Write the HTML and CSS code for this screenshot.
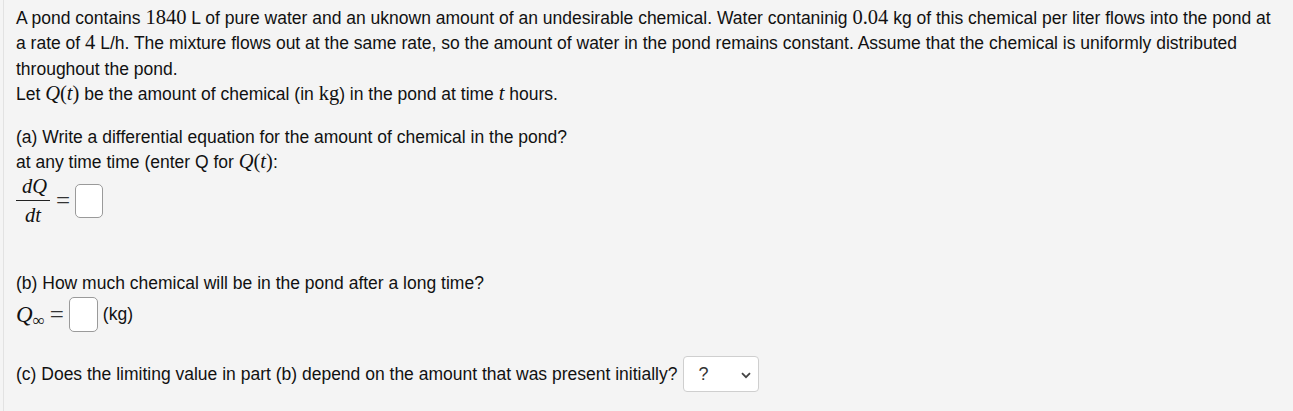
FILE: index.html
```html
<!DOCTYPE html>
<html>
<head>
<meta charset="utf-8">
<link rel="stylesheet" href="styles.css">
</head>
<body>
<div class="problem">
  <p class="intro">A pond contains <span class="m">1840</span> L of pure water and an uknown amount of an undesirable chemical. Water contaninig <span class="m">0.04</span> kg of this chemical per liter flows into the pond at a rate of <span class="m">4</span> L/h. The mixture flows out at the same rate, so the amount of water in the pond remains constant. Assume that the chemical is uniformly distributed throughout the pond.<br>Let <span class="m"><i>Q</i>(<i>t</i>)</span> be the amount of chemical (in <span class="m">kg</span>) in the pond at time <span class="m"><i>t</i></span> hours.</p>

  <p class="part-a">(a) Write a differential equation for the amount of chemical in the pond?<br>at any time time (enter Q for <span class="m"><i>Q</i>(<i>t</i>)</span>:</p>
  <div class="eq-row">
    <span class="frac m"><span class="num"><i>dQ</i></span><span class="den"><i>dt</i></span></span>
    <span class="eq">=</span>
    <span class="answer tall"></span>
  </div>

  <p class="part-b">(b) How much chemical will be in the pond after a long time?</p>
  <div class="eq-row qinf">
    <span class="q"><i>Q</i><span class="inf">∞</span></span>
    <span class="eq">=</span>
    <span class="answer"></span>
    <span class="unit">(kg)</span>
  </div>

  <div class="part-c">
    <span>(c) Does the limiting value in part (b) depend on the amount that was present initially?</span>
    <span class="select"><span class="sel-text">?</span><svg class="chev" width="10" height="7" viewBox="0 0 10 7"><path d="M1 1.2 L5 5.2 L9 1.2" fill="none" stroke="#444" stroke-width="1.8"/></svg></span>
  </div>
</div>
</body>
</html>
```

FILE: styles.css
```css
html, body {
  margin: 0;
  padding: 0;
  background: #f4f4f4;
}
body {
  font-family: "Liberation Sans", Arial, sans-serif;
  font-size: 17.5px;
  color: #111;
  height: 411px;
  overflow: hidden;
}
.problem {
  margin-left: 3px;
  border-left: 1px solid #e2e2e2;
  background: #f4f4f4;
  padding: 6px 12px 0 12px;
  min-height: 411px;
  box-sizing: border-box;
}
p {
  margin: 0;
  line-height: 25.3px;
}
.m {
  font-family: "Liberation Serif", "Times New Roman", serif;
  font-size: 20.5px;
  line-height: 1;
}
.m i {
  font-style: italic;
}
.intro {
  margin-bottom: 18px;
}
.eq-row {
  display: flex;
  align-items: center;
  height: 50px;
}
.frac {
  display: inline-flex;
  flex-direction: column;
  align-items: center;
  line-height: 1;
  width: 34px;
  font-size: 20.5px;
}
.frac .num {
  display: block;
  width: 100%;
  text-align: center;
  padding-bottom: 3px;
  border-bottom: 1px solid #222;
  padding-left: 3px;
  box-sizing: border-box;
}
.frac .den {
  display: block;
  padding-top: 4px;
}
.eq {
  font-family: "Liberation Serif", "Times New Roman", serif;
  font-size: 25px;
  line-height: 1;
  margin: 0 5px 0 6px;
  color: #333;
}
.answer {
  display: inline-block;
  width: 28px;
  height: 34px;
  background: #fff;
  border: 1px solid #9a9a9a;
  border-radius: 5px;
  box-sizing: border-box;
}
.part-b {
  margin-top: 45px;
}
.qinf {
  height: 36px;
}
.q {
  font-family: "Liberation Serif", "Times New Roman", serif;
  font-size: 23px;
  line-height: 1;
  display: inline-flex;
  align-items: baseline;
}
.q i {
  font-style: italic;
}
.q .inf {
  font-size: 17px;
  position: relative;
  top: 4px;
  margin-left: 0;
}
.qinf .eq {
  margin: 0 5px 0 5px;
}
.qinf .answer {
  height: 35px;
  width: 29px;
}
.unit {
  margin-left: 5px;
}
.part-c {
  display: flex;
  align-items: center;
  margin-top: 24px;
  height: 36px;
}
.select {
  display: inline-flex;
  align-items: center;
  justify-content: space-between;
  margin-left: 6px;
  width: 76px;
  height: 36px;
  background: #fff;
  border: 1px solid #cfcfcf;
  border-radius: 4px;
  box-sizing: border-box;
  padding: 0 7px 0 14px;
  color: #333;
}
.sel-text {
  font-size: 18px;
}
.chev {
  display: block;
  margin-top: 2px;
}
```
